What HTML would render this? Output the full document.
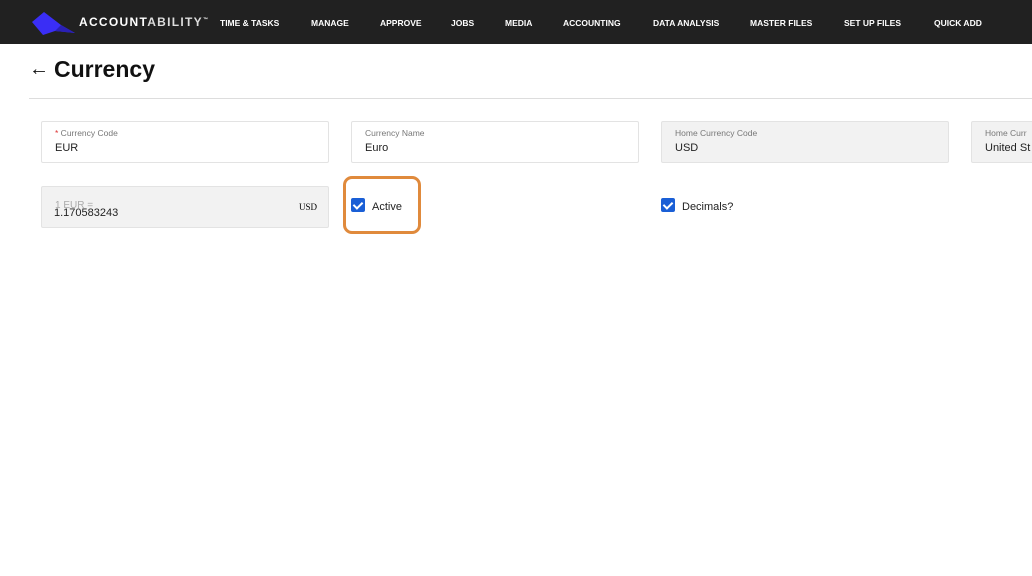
<!DOCTYPE html>
<html><head><style>
*{margin:0;padding:0;box-sizing:border-box}
body{width:1032px;height:576px;background:#fff;font-family:"Liberation Sans",sans-serif;position:relative;overflow:hidden}
.nav{position:absolute;left:0;top:0;width:1032px;height:44px;background:#212121}
.nav span{position:absolute;top:18px;color:#fff;font-size:8.5px;font-weight:bold}
.logo{position:absolute;left:79px;top:15px;color:#fff;font-size:12px;font-weight:bold;letter-spacing:1.3px}
.logo i{font-style:normal;color:#ddd;font-weight:bold}
.f{position:absolute;height:42px;border:1px solid #e3e3e3;border-radius:2px}
.f.g{background:#f2f2f2}
.f .l{position:absolute;left:13px;top:6px;font-size:8.5px;color:#777}
.f .v{position:absolute;left:13px;top:20px;font-size:11px;color:#222}
.cb{position:absolute;width:14px;height:14px;background:#1a5fd6;border-radius:2px}
.cb:after{content:"";position:absolute;left:4px;top:1.5px;width:4px;height:7px;border:solid #fff;border-width:0 2px 2px 0;transform:rotate(45deg)}
.t{position:absolute;font-size:11px;color:#222}
</style></head><body>
<div class="nav">
<svg style="position:absolute;left:31px;top:11px" width="46" height="24" viewBox="0 0 46 24"><polygon points="1,11 13,1 30,14 44,22 24,20 12,24" fill="#3a2ef5"/><polygon points="30,14 44,22 24,20" fill="#2a20b5"/></svg>
<div class="logo">ACCOUNT<i>ABILITY</i><sup style="font-size:5px">™</sup></div>
<span style="left:220px">TIME &amp; TASKS</span><span style="left:311px">MANAGE</span><span style="left:380px">APPROVE</span><span style="left:451px">JOBS</span><span style="left:505px">MEDIA</span><span style="left:563px">ACCOUNTING</span><span style="left:653px">DATA ANALYSIS</span><span style="left:750px">MASTER FILES</span><span style="left:844px">SET UP FILES</span><span style="left:934px">QUICK ADD</span>
</div>
<div style="position:absolute;left:29px;top:59px;font-size:20px;color:#111;line-height:1">←</div>
<div style="position:absolute;left:54px;top:56px;font-size:23px;font-weight:bold;color:#111">Currency</div>
<div style="position:absolute;left:29px;top:98px;width:1003px;height:1px;background:#ddd"></div>
<div class="f" style="left:41px;top:121px;width:288px"><div class="l"><span style="color:#d33">*</span> Currency Code</div><div class="v">EUR</div></div>
<div class="f" style="left:351px;top:121px;width:288px"><div class="l">Currency Name</div><div class="v">Euro</div></div>
<div class="f g" style="left:661px;top:121px;width:288px"><div class="l">Home Currency Code</div><div class="v">USD</div></div>
<div class="f g" style="left:971px;top:121px;width:100px"><div class="l">Home Curr</div><div class="v">United St</div></div>
<div class="f g" style="left:41px;top:186px;width:288px"><div class="l" style="top:13px;font-size:10px;color:#aaa">1 EUR =</div><div class="v" style="top:20px;left:12px">1.170583243</div><div style="position:absolute;right:11px;top:15px;font-size:9px;font-family:'Liberation Serif',serif">USD</div></div>
<div style="position:absolute;left:343px;top:176px;width:78px;height:58px;border:3px solid #e08a3c;border-radius:9px"></div>
<div class="cb" style="left:351px;top:198px"></div><div class="t" style="left:372px;top:201px">Active</div>
<div class="cb" style="left:661px;top:198px"></div><div class="t" style="left:682px;top:201px">Decimals?</div>
</body></html>
